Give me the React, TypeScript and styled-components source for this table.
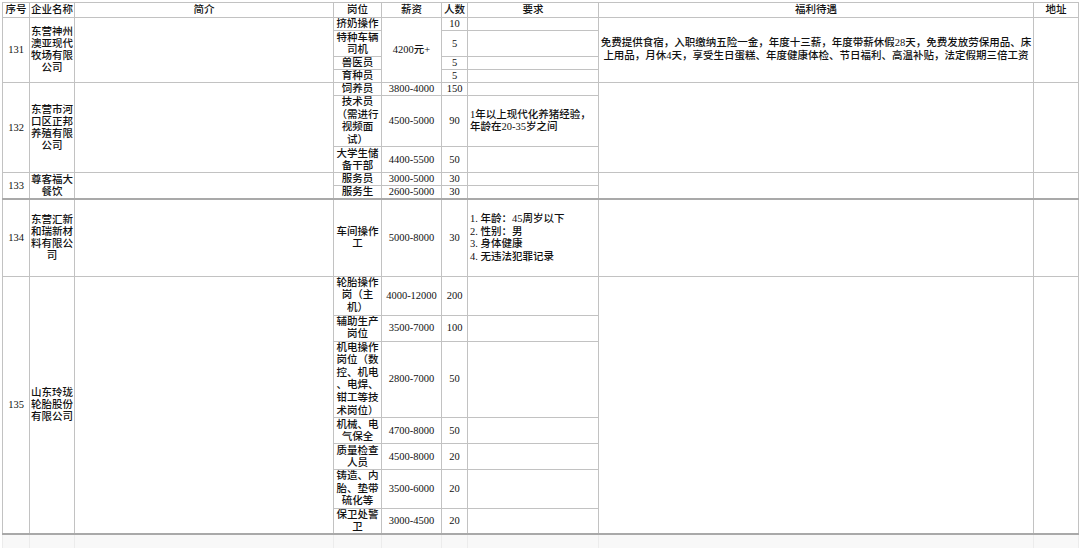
import React from "react";
import styled, { createGlobalStyle } from "styled-components";

const GlobalStyle = createGlobalStyle`
  html, body {
    margin: 0;
    padding: 0;
    background: #ffffff;
  }
  body {
    font-family: "Liberation Serif", "Noto Sans CJK SC", serif;
    color: #111111;
  }
`;

const Page = styled.div`
  width: 1080px;
  height: 548px;
  overflow: hidden;
  background: #ffffff;
  padding: 2px 0 0 2px;
  box-sizing: border-box;
`;

const Table = styled.table`
  border-collapse: collapse;
  table-layout: fixed;
  width: 1076px;
  font-size: 10.5px;
  font-weight: 500;
  line-height: 12px;
`;

const Group = styled.tbody<{ $heavy?: boolean; $faint?: boolean }>`
  border-bottom: ${(p) => (p.$heavy ? "2px solid #a9a9a9" : "none")};
  background: ${(p) => (p.$faint ? "#f8f8f8" : "transparent")};
`;

const Row = styled.tr<{ $h: number }>`
  height: ${(p) => p.$h}px;
`;

const HeadCell = styled.th`
  border: 1px solid #c2c2c2;
  padding: 0;
  font-weight: 500;
  text-align: center;
  vertical-align: middle;
  white-space: nowrap;
`;

const Cell = styled.td<{ $left?: boolean; $faint?: boolean; $tall?: boolean }>`
  border: 1px solid ${(p) => (p.$faint ? "#ececec" : "#c2c2c2")};
  padding: ${(p) => (p.$left ? "0 0 0 2px" : "0")};
  text-align: ${(p) => (p.$left ? "left" : "center")};
  vertical-align: middle;
  white-space: nowrap;
  overflow: hidden;
  line-height: ${(p) => (p.$tall ? "12.6px" : "12px")};
`;

const Lines = ({ items }: { items: string[] }) => (
  <>
    {items.map((t, i) => (
      <React.Fragment key={i}>
        {i > 0 && <br />}
        {t}
      </React.Fragment>
    ))}
  </>
);

type Job = {
  title: string[];
  salary?: string;
  salarySpan?: number;
  count: string;
  req?: string[];
  h: number;
};

type Company = {
  no: string;
  name: string[];
  jobs: Job[];
  welfare?: string[];
  heavy?: boolean;
};

const widths = [27, 45, 259, 48, 60, 26, 131, 435, 45];
const headers = ["序号", "企业名称", "简介", "岗位", "薪资", "人数", "要求", "福利待遇", "地址"];

const companies: Company[] = [
  {
    no: "131",
    name: ["东营神州", "澳亚现代", "牧场有限", "公司"],
    welfare: [
      "免费提供食宿，入职缴纳五险一金，年度十三薪，年度带薪休假28天，免费发放劳保用品、床",
      "上用品，月休4天，享受生日蛋糕、年度健康体检、节日福利、高温补贴，法定假期三倍工资",
    ],
    jobs: [
      { title: ["挤奶操作"], salary: "4200元+", salarySpan: 4, count: "10", h: 13 },
      { title: ["特种车辆", "司机"], count: "5", h: 26 },
      { title: ["兽医员"], count: "5", h: 13 },
      { title: ["育种员"], count: "5", h: 13 },
    ],
  },
  {
    no: "132",
    name: ["东营市河", "口区正邦", "养殖有限", "公司"],
    jobs: [
      { title: ["饲养员"], salary: "3800-4000", count: "150", h: 13 },
      {
        title: ["技术员", "（需进行", "视频面", "试）"],
        salary: "4500-5000",
        count: "90",
        req: ["1年以上现代化养猪经验，", "年龄在20-35岁之间"],
        h: 51,
      },
      { title: ["大学生储", "备干部"], salary: "4400-5500", count: "50", h: 26 },
    ],
  },
  {
    no: "133",
    name: ["尊客福大", "餐饮"],
    heavy: true,
    jobs: [
      { title: ["服务员"], salary: "3000-5000", count: "30", h: 13 },
      { title: ["服务生"], salary: "2600-5000", count: "30", h: 13 },
    ],
  },
  {
    no: "134",
    name: ["东营汇新", "和瑞新材", "料有限公", "司"],
    jobs: [
      {
        title: ["车间操作", "工"],
        salary: "5000-8000",
        count: "30",
        req: ["1. 年龄：45周岁以下", "2. 性别：男", "3. 身体健康", "4. 无违法犯罪记录"],
        h: 77,
      },
    ],
  },
  {
    no: "135",
    name: ["山东玲珑", "轮胎股份", "有限公司"],
    heavy: true,
    jobs: [
      { title: ["轮胎操作", "岗（主", "机）"], salary: "4000-12000", count: "200", h: 38 },
      { title: ["辅助生产", "岗位"], salary: "3500-7000", count: "100", h: 26 },
      {
        title: ["机电操作", "岗位（数", "控、机电", "、电焊、", "钳工等技", "术岗位）"],
        salary: "2800-7000",
        count: "50",
        h: 76,
      },
      { title: ["机械、电", "气保全"], salary: "4700-8000", count: "50", h: 26 },
      { title: ["质量检查", "人员"], salary: "4500-8000", count: "20", h: 26 },
      { title: ["铸造、内", "胎、垫带", "硫化等"], salary: "3500-6000", count: "20", h: 38 },
      { title: ["保卫处警", "卫"], salary: "3000-4500", count: "20", h: 25 },
    ],
  },
];

const CompanyRows = ({ c }: { c: Company }) => {
  const span = c.jobs.length;
  return (
    <Group $heavy={c.heavy}>
      {c.jobs.map((job, i) => (
        <Row key={i} $h={job.h}>
          {i === 0 && (
            <>
              <Cell rowSpan={span}>{c.no}</Cell>
              <Cell rowSpan={span}>
                <Lines items={c.name} />
              </Cell>
              <Cell rowSpan={span} />
            </>
          )}
          <Cell $tall={job.title.length > 2}>
            <Lines items={job.title} />
          </Cell>
          {job.salary !== undefined && <Cell rowSpan={job.salarySpan ?? 1}>{job.salary}</Cell>}
          <Cell>{job.count}</Cell>
          <Cell $left $tall>{job.req && <Lines items={job.req} />}</Cell>
          {i === 0 && (
            <>
              <Cell rowSpan={span} $tall>{c.welfare && <Lines items={c.welfare} />}</Cell>
              <Cell rowSpan={span} />
            </>
          )}
        </Row>
      ))}
    </Group>
  );
};

export default function App() {
  return (
    <Page>
      <GlobalStyle />
      <Table>
        <colgroup>
          {widths.map((w, i) => (
            <col key={i} style={{ width: w }} />
          ))}
        </colgroup>
        <thead>
          <Row $h={15}>
            {headers.map((h) => (
              <HeadCell key={h}>{h}</HeadCell>
            ))}
          </Row>
        </thead>
        {companies.map((c) => (
          <CompanyRows key={c.no} c={c} />
        ))}
        <Group $faint>
          <Row $h={15}>
            {widths.map((_, i) => (
              <Cell key={i} $faint />
            ))}
          </Row>
        </Group>
      </Table>
    </Page>
  );
}
